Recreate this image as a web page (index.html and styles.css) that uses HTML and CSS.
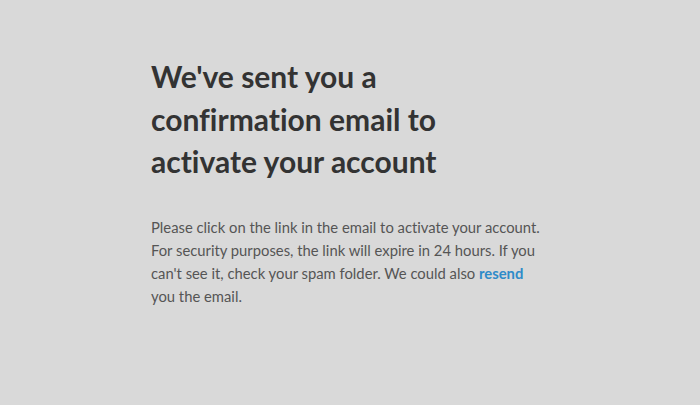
FILE: index.html
```html
<!DOCTYPE html>
<html>
<head>
<meta charset="utf-8">
<link rel="stylesheet" href="styles.css">
</head>
<body>
<main class="wrap">
  <h1 class="title">We've sent you a<br>confirmation email to<br>activate your account</h1>
  <p class="text">Please click on the link in the email to activate your account.<br>For security purposes, the link will expire in 24 hours. If you<br>can't see it, check your spam folder. We could also <a class="link" href="#">resend</a><br>you the email.</p>
</main>
</body>
</html>
```
FILE: styles.css
```css
html, body {
  margin: 0;
  padding: 0;
  background: #d9d9d9;
}
body {
  font-family: Lato, "Open Sans", sans-serif;
  font-variant-ligatures: no-common-ligatures;
}
.wrap {
  width: 398px;
  margin: 0 auto;
  padding-top: 55px;
}
.title {
  margin: 0;
  font-size: 30px;
  line-height: 42.5px;
  font-weight: 700;
  color: #333333;
}
.text {
  margin: 33px 0 0;
  font-size: 14.8px;
  line-height: 23px;
  color: #555555;
}
.link {
  color: #2e8bc9;
  font-weight: 700;
  text-decoration: none;
}
```
